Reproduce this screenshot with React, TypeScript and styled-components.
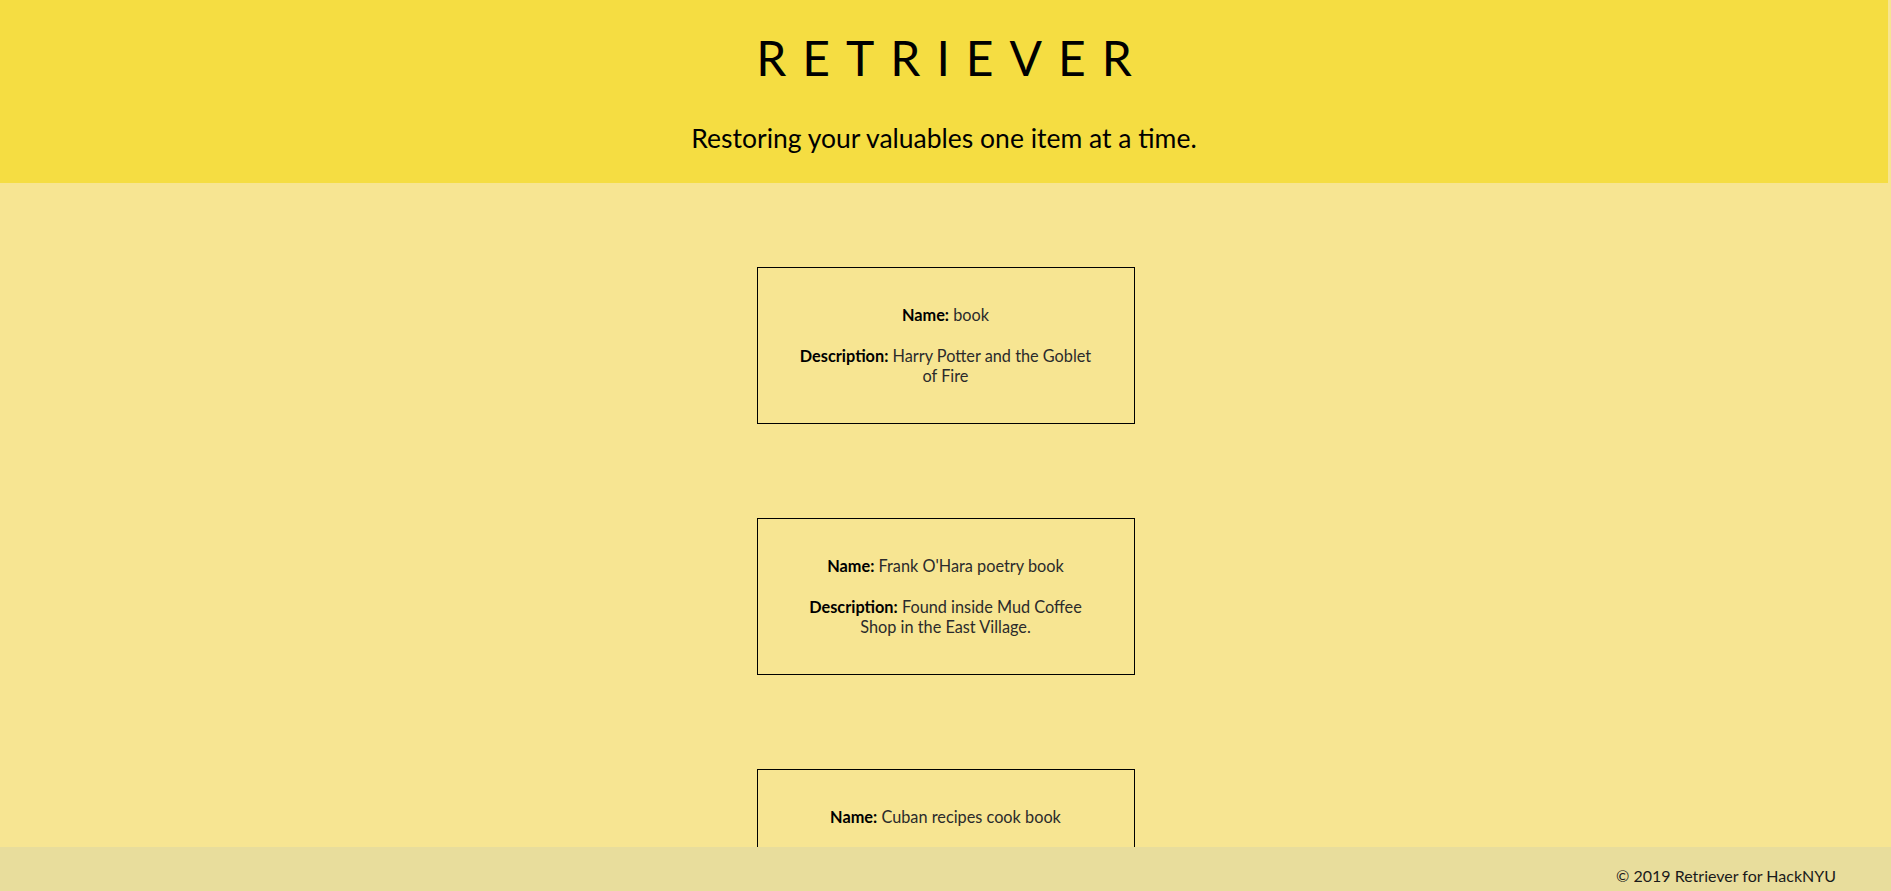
import React from 'react'
import styled, { createGlobalStyle } from 'styled-components'

interface Item {
  name: string
  description: string
}

const items: Item[] = [
  { name: 'book', description: 'Harry Potter and the Goblet of Fire' },
  { name: "Frank O'Hara poetry book", description: 'Found inside Mud Coffee Shop in the East Village.' },
  { name: 'Cuban recipes cook book', description: 'Left on a bench in Washington Square Park.' },
]

const GlobalStyle = createGlobalStyle`
  html, body {
    margin: 0;
    padding: 0;
    background: #f7e592;
  }
  body {
    font-family: Lato, "Noto Sans", sans-serif;
    color: #000;
  }
`

const Header = styled.header`
  background: #f5dd42;
  height: 183px;
  margin-right: 3px;
  display: flex;
  flex-direction: column;
  align-items: center;
`

const Title = styled.h1`
  margin: 31px 0 0;
  font-size: 48px;
  font-weight: 400;
  line-height: 54px;
  letter-spacing: 16px;
  padding-left: 16px;
`

const Subtitle = styled.h2`
  margin: 38px 0 0;
  font-size: 26.5px;
  font-weight: 400;
  line-height: 30px;
`

const List = styled.main`
  display: flex;
  flex-direction: column;
  align-items: center;
  gap: 94px;
  padding: 84px 0 120px;
`

const Card = styled.section`
  width: 298px;
  padding: 37px 39px;
  border: 1px solid #000;
  display: flex;
  flex-direction: column;
  gap: 21px;
  text-align: center;
  font-size: 16.3px;
  line-height: 20px;
`

const Field = styled.p`
  margin: 0;
  color: #2b2b2b;
`

const Label = styled.strong`
  font-weight: 700;
  color: #000;
`

const Footer = styled.footer`
  position: fixed;
  left: 0;
  right: 0;
  bottom: 0;
  height: 44px;
  background: #e8dd9c;
  display: flex;
  justify-content: flex-end;
  align-items: flex-end;
  padding: 0 55px 5px 0;
  box-sizing: border-box;
  font-size: 16px;
  line-height: 20px;
  color: #1a1a1a;
`

const App = () => (
  <>
    <GlobalStyle />
    <Header>
      <Title>RETRIEVER</Title>
      <Subtitle>Restoring your valuables one item at a time.</Subtitle>
    </Header>
    <List>
      {items.map(item => (
        <Card key={item.name}>
          <Field>
            <Label>Name:</Label> {item.name}
          </Field>
          <Field>
            <Label>Description:</Label> {item.description}
          </Field>
        </Card>
      ))}
    </List>
    <Footer>© 2019 Retriever for HackNYU</Footer>
  </>
)

export default App
